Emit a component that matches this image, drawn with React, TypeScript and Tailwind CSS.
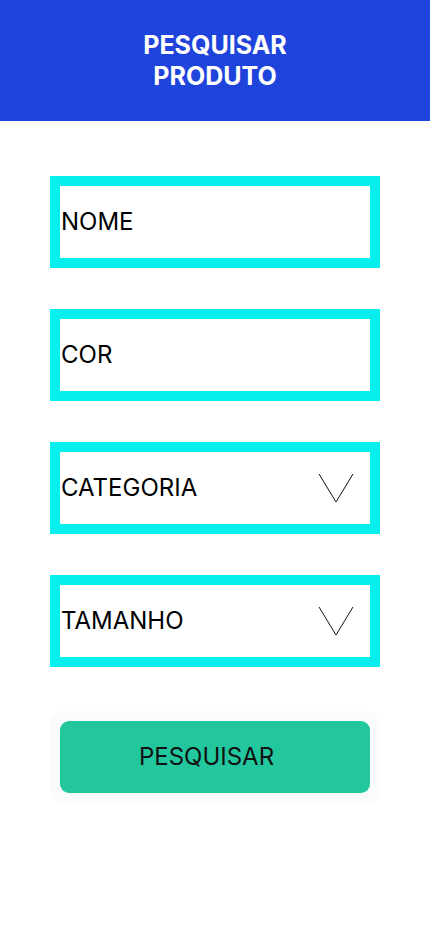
import { useState } from "react";

function Chevron() {
  return (
    <svg width="36" height="30" viewBox="0 0 36 30" fill="none" className="shrink-0">
      <path d="M1 1 L18 29 L35 1" stroke="#111" strokeWidth="1" />
    </svg>
  );
}

function Field({ label, select }: { label: string; select?: boolean }) {
  return (
    <div className="flex h-[92px] items-center justify-between border-[10px] border-[#06eeee] bg-white pl-px pr-[16px]">
      <span className="text-[24px] text-black">{label}</span>
      {select && <Chevron />}
    </div>
  );
}

export default function App() {
  const [query] = useState("");

  return (
    <div className="min-h-[932px] bg-white font-['Inter',sans-serif]" data-q={query}>
      <header className="flex h-[121px] flex-col items-center justify-center bg-[#1f44db] text-[25px] font-bold leading-[31px] text-white">
        <span>PESQUISAR</span>
        <span>PRODUTO</span>
      </header>

      <main className="flex flex-col gap-[41px] px-[50px] pt-[55px]">
        <Field label="NOME" />
        <Field label="COR" />
        <Field label="CATEGORIA" select />
        <Field label="TAMANHO" select />

        <div className="mt-[3px] rounded-[14px] bg-[#fbfbfb] p-[10px]">
          <button className="flex h-[72px] w-full items-center justify-center rounded-[9px] bg-[#22c79e] pr-[17px] text-[24px] text-[#111]">
            PESQUISAR
          </button>
        </div>
      </main>
    </div>
  );
}
